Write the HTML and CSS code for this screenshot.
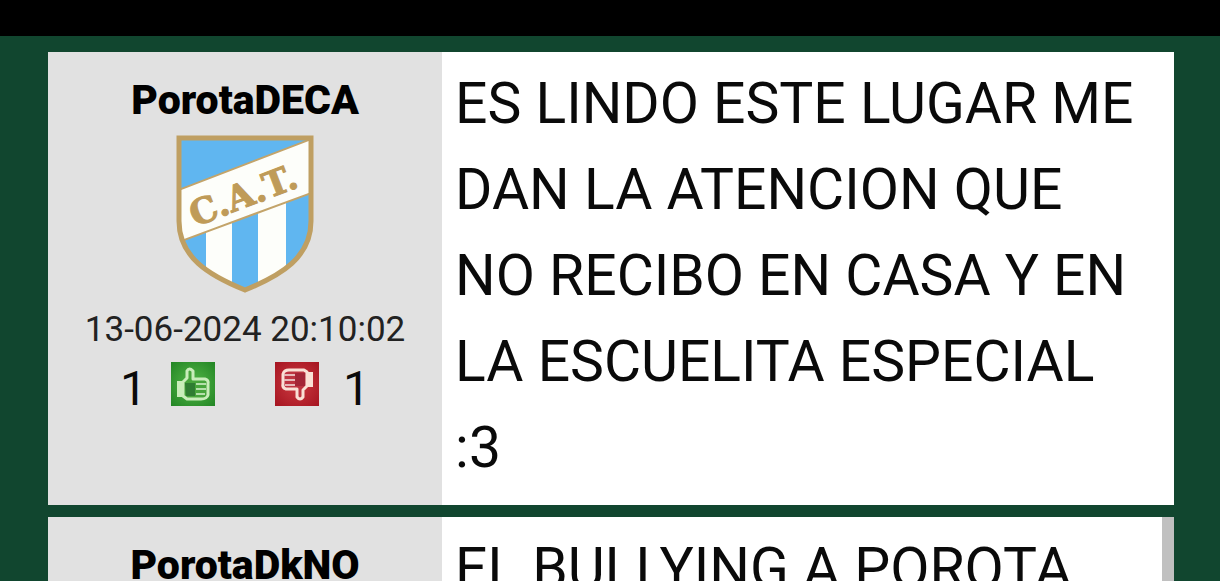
FILE: index.html
```html
<!DOCTYPE html>
<html lang="es">
<head>
<meta charset="utf-8">
<meta name="viewport" content="width=device-width, initial-scale=1">
<title>Comentarios</title>
<link rel="stylesheet" href="styles.css">
</head>
<body>
<header class="topbar"></header>
<main class="thread">
  <article class="post">
    <aside class="author">
      <h2 class="name">PorotaDECA</h2>
      <svg class="crest" viewBox="0 0 138 158" role="img" aria-label="C.A.T.">
        <defs>
          <clipPath id="shield"><path d="M2 2H136V86C136 124 106 142 69 156C32 142 2 124 2 86Z"/></clipPath>
        </defs>
        <g clip-path="url(#shield)">
          <rect width="138" height="158" fill="#60b6f0"/>
          <path d="M30 60H56V158H30ZM82 60H110V158H82Z" fill="#fdfefa"/>
          <path d="M0 56L138 3V57L0 108Z" fill="#fdfefa" stroke="#c3a46a" stroke-width="2"/>
        </g>
        <path d="M3 3H135V86C135 122 106 140 69 155C32 140 3 122 3 86Z" fill="none" stroke="#bf9f62" stroke-width="5"/>
        <text class="crest-text" transform="translate(19 92) rotate(-21)">C.A.T.</text>
      </svg>
      <time class="date" datetime="2024-06-13T20:10:02">13-06-2024 20:10:02</time>
      <div class="votes">
        <span class="count">1</span>
        <button class="vote up" type="button" aria-label="Me gusta">
          <svg viewBox="0 0 44 44"><path d="M7 20H11V34H7Z" fill="#c9edba" stroke="#c9edba" stroke-width="2"/><path d="M12 20L16 16V9Q18 5 22 9V17H34Q38 18 37 22V33Q36 37 30 37H16L12 34Z" fill="#48a53c" stroke="#c9edba" stroke-width="3" stroke-linejoin="round"/><path d="M14 21H24V34H15Z" fill="#2f7d32"/><path d="M25 22H35M25 27H35M25 32H34" stroke="#b5dfab" stroke-width="2"/></svg>
        </button>
        <button class="vote down" type="button" aria-label="No me gusta">
          <svg viewBox="0 0 44 44"><path d="M33 11H37V24H33Z" fill="#fae0d5" stroke="#fae0d5" stroke-width="2"/><path d="M32 24L28 28V35Q25 39 22 35V27H11Q7 26 8 21V12Q9 8 14 8H29L32 10Z" fill="#bd3440" stroke="#fae0d5" stroke-width="3" stroke-linejoin="round"/><path d="M20 11H30V24H20Z" fill="#a32536"/><path d="M9 13H20M9 18H20M10 23H20" stroke="#e6b8b8" stroke-width="2"/></svg>
        </button>
        <span class="count">1</span>
      </div>
    </aside>
    <p class="message">ES LINDO ESTE LUGAR ME DAN LA ATENCION QUE NO RECIBO EN CASA Y EN LA ESCUELITA ESPECIAL :3</p>
  </article>
  <article class="post marked">
    <aside class="author">
      <h2 class="name">PorotaDkNO</h2>
    </aside>
    <p class="message">EL BULLYING A POROTA,</p>
  </article>
</main>
</body>
</html>
```
FILE: styles.css
```css
* { box-sizing: border-box; }

body {
  margin: 0;
  height: 100vh;
  overflow: hidden;
  background: #11462f;
  color: #0a0a0a;
  font-family: Roboto, "Liberation Sans", sans-serif;
}

.topbar {
  height: 36px;
  background: #000;
}

.thread {
  display: flex;
  flex-direction: column;
  gap: 12px;
  padding: 16px 46px 16px 48px;
}

.post {
  display: grid;
  grid-template-columns: 35% 1fr;
  background: #fff;
}

.marked {
  background: linear-gradient(to left, #c0c0c0 12px, #fff 12px);
}

.author {
  display: flex;
  flex-direction: column;
  align-items: center;
  padding-top: 24px;
  background: #e1e1e1;
}

.name {
  margin: 0;
  color: #000;
  font-size: 41px;
  font-weight: 900;
  line-height: 48px;
}

.crest {
  width: 138px;
  height: 158px;
  margin-top: 11px;
}

.crest-text {
  fill: #bf9b58;
  stroke: #bf9b58;
  stroke-width: 1px;
  font: bold 35px "DejaVu Serif", serif;
}

.date {
  margin-top: 16px;
  color: #222;
  font-size: 35px;
  line-height: 42px;
}

.votes {
  display: flex;
  align-items: flex-start;
  margin-top: 11px;
}

.count {
  font-size: 48px;
  line-height: 54px;
}

.vote {
  width: 44px;
  height: 44px;
  padding: 0;
  border: 0;
}

.vote svg { display: block; }

.up {
  margin: 0 30px 0 24px;
  background: radial-gradient(#55b848, #228524);
}

.down {
  margin: 0 24px 0 30px;
  background: radial-gradient(#cc3b42, #a51420);
}

.message {
  margin: 0;
  padding: 9px 32px 14px 13px;
  font-size: 57px;
  line-height: 86px;
}
```
